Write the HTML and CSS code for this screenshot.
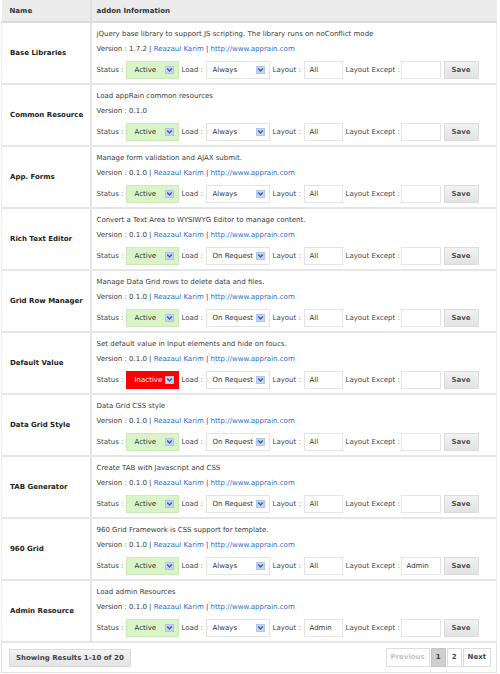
FILE: index.html
```html
<!DOCTYPE html>
<html>
<head>
<meta charset="utf-8">
<link rel="stylesheet" href="styles.css">
</head>
<body>
<div class="wrap">
<table class="grid">
  <thead>
    <tr><th class="col-name">Name</th><th class="col-info">addon Information</th></tr>
  </thead>
  <tbody id="rows"></tbody>
</table>
<div class="footer">
  <span class="showing">Showing Results 1-10 of 20</span>
  <div class="pager">
    <span class="pg disabled">Previous</span>
    <span class="pg current">1</span>
    <span class="pg">2</span>
    <span class="pg">Next</span>
  </div>
</div>
</div>
<script src="app.js"></script>
</body>
</html>
```
FILE: app.js
```js
const addons = [
  ["Base Libraries", "jQuery base library to support JS scripting. The library runs on noConflict mode", "1.7.2", true, "Active", "Always", "All", ""],
  ["Common Resource", "Load appRain common resources", "0.1.0", false, "Active", "Always", "All", ""],
  ["App. Forms", "Manage form validation and AJAX submit.", "0.1.0", true, "Active", "Always", "All", ""],
  ["Rich Text Editor", "Convert a Text Area to WYSIWYG Editor to manage content.", "0.1.0", true, "Active", "On Request", "All", ""],
  ["Grid Row Manager", "Manage Data Grid rows to delete data and files.", "0.1.0", true, "Active", "On Request", "All", ""],
  ["Default Value", "Set default value in Input elements and hide on foucs.", "0.1.0", true, "Inactive", "On Request", "All", ""],
  ["Data Grid Style", "Data Grid CSS style", "0.1.0", true, "Active", "On Request", "All", ""],
  ["TAB Generator", "Create TAB with Javascript and CSS", "0.1.0", true, "Active", "On Request", "All", ""],
  ["960 Grid", "960 Grid Framework is CSS support for template.", "0.1.0", true, "Active", "Always", "All", "Admin"],
  ["Admin Resource", "Load admin Resources", "0.1.0", true, "Active", "Always", "Admin", ""]
];
const arrow = '<span class="arr"><svg width="7" height="6" viewBox="0 0 7 6"><path d="M1.2 1.6 L3.5 4 L5.8 1.6" fill="none" stroke="#3b5fae" stroke-width="1.5"/></svg></span>';
const tb = document.getElementById("rows");
tb.innerHTML = addons.map(a => {
  const ver = a[3]
    ? `Version : ${a[2]} | <a href="#">Reazaul Karim</a> | <a href="#">http://www.apprain.com</a>`
    : `Version : ${a[2]}`;
  const st = a[4] === "Active" ? "sel st-on" : "sel st-off";
  return `<tr>
    <td class="col-name">${a[0]}</td>
    <td class="col-info">
      <div class="desc">${a[1]}</div>
      <div class="ver">${ver}</div>
      <div class="ctrls">
        <span class="lbl first">Status :</span>
        <span class="${st}"><span class="val">${a[4]}</span>${arrow}</span>
        <span class="lbl">Load :</span>
        <span class="sel load"><span class="val">${a[5]}</span>${arrow}</span>
        <span class="lbl">Layout :</span>
        <span class="inp">${a[6]}</span>
        <span class="lbl">Layout Except :</span>
        <span class="inp">${a[7]}</span>
        <span class="btn">Save</span>
      </div>
    </td>
  </tr>`;
}).join("");
```
FILE: styles.css
```css
html, body { margin: 0; padding: 0; background: #fff; }
body {
  font-family: "DejaVu Sans", Verdana, sans-serif;
  font-size: 7px;
  color: #333;
}
.wrap { width: 497px; padding: 0 0 0 1px; }
.grid {
  width: 496px;
  border-collapse: collapse;
  table-layout: fixed;
}
.grid th {
  background: #ececec;
  height: 21px;
  padding: 0;
  text-align: left;
  font-weight: bold;
  color: #333;
  border-bottom: 2px solid #dcdcdc;
}
.grid th.col-name { padding-left: 8px; border-right: 2px solid #dedede; box-sizing: border-box; width: 89px; }
.grid th.col-info { padding-left: 5px; }
.grid td {
  padding: 0;
  border-bottom: 2px solid #e6e6e6;
  vertical-align: middle;
}
.grid td.col-name {
  padding-left: 8px;
  font-weight: bold;
  color: #222;
  border-right: 2px solid #e6e6e6;
  border-left: 1px solid #ededed;
}
.grid td.col-info {
  padding: 6px 0 4px 5px;
  border-right: 1px solid #ededed;
}
.desc, .ver { height: 10px; line-height: 10px; white-space: nowrap; color: #3a3a3a; }
.ver { margin-top: 5px; }
.ver a { color: #1f6ccf; text-decoration: none; }
.ctrls {
  margin-top: 7px;
  height: 18px;
  display: grid;
  grid-template-columns: 29px 53px 27px 64px 34px 39px 58px 40px 38px;
  align-items: center;
}
.lbl { padding-left: 3px; color: #444; white-space: nowrap; }
.lbl.first { padding-left: 0; }
.sel {
  height: 18px;
  box-sizing: border-box;
  display: flex;
  align-items: center;
  padding-left: 8px;
  border: 1px solid #e4e4e4;
  background: #fff;
}
.sel.st-on { background: #d9f4c6; border-color: #cde9b9; }
.sel.st-off { background: #ff0000; border-color: #f00; color: #fff; }
.sel.load { padding-left: 6px; }
.val { flex: 1; white-space: nowrap; }
.arr {
  width: 9px; height: 8px;
  margin-right: 4px;
  background: #c4d5f3;
  border: 1px solid #b3c6ea;
  box-sizing: border-box;
  display: flex; align-items: center; justify-content: center;
}
.arr svg { display: block; width: 7px; height: 6px; }
.inp {
  height: 18px;
  box-sizing: border-box;
  border: 1px solid #e4e4e4;
  line-height: 16px;
  padding-left: 5px;
  background: #fff;
}
.btn {
  grid-column: 9;
  margin-left: 3px;
  height: 18px;
  box-sizing: border-box;
  border: 1px solid #dcdcdc;
  background: linear-gradient(#f2f2f2, #e2e2e2);
  color: #555;
  text-align: center;
  line-height: 16px;
  font-weight: bold;
  width: 35px;
}
.footer {
  height: 30px;
  box-sizing: border-box;
  width: 496px;
  border: 1px solid #e2e2e2;
  border-top: none;
  display: flex;
  align-items: center;
  justify-content: space-between;
  padding: 0 5px 0 7px;
}
.showing {
  height: 18px;
  line-height: 16px;
  box-sizing: border-box;
  padding: 0 6px;
  border: 1px solid #dcdcdc;
  background: linear-gradient(#f3f3f3, #e3e3e3);
  font-weight: bold;
  color: #444;
}
.pager { display: flex; gap: 1px; }
.pg {
  height: 19px;
  line-height: 17px;
  box-sizing: border-box;
  border: 1px solid #dcdcdc;
  padding: 0 4px;
  color: #444;
  font-weight: bold;
  background: #fff;
}
.pg.disabled { color: #c4c4c4; }
.pg.current { background: #cfcfcf; border-color: #c4c4c4; }
```
